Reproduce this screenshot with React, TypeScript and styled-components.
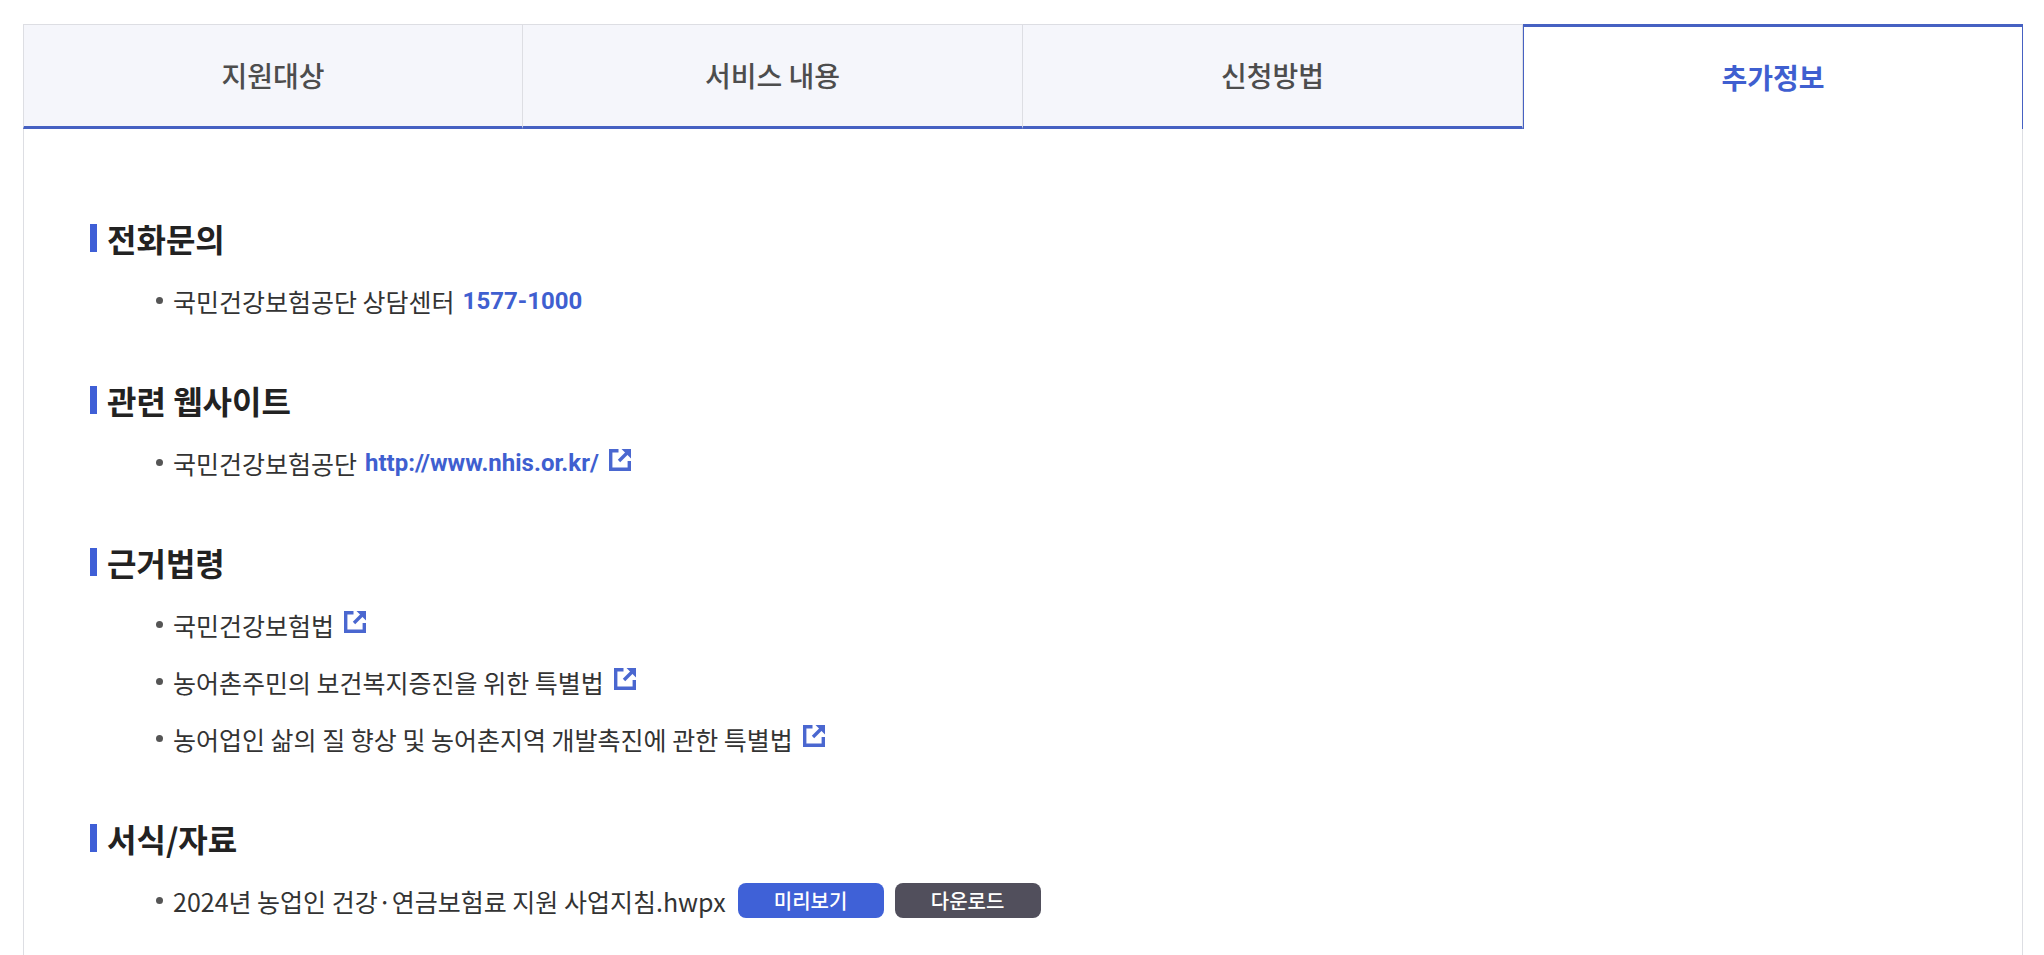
import React, { useState } from "react";
import styled, { createGlobalStyle } from "styled-components";

const GlobalStyle = createGlobalStyle`
  *, *::before, *::after { box-sizing: border-box; }
  body {
    margin: 0;
    background: #fff;
    color: #333;
    font-family: "Noto Sans CJK KR", "Noto Sans", sans-serif;
  }
`;

const Page = styled.main`
  display: flex;
  flex-direction: column;
  min-height: 100vh;
  padding: 24px 21px 0 23px;
`;

const TabList = styled.div`
  display: grid;
  grid-template-columns: repeat(4, 1fr);
`;

const Tab = styled.button<{ $active: boolean }>`
  height: 105px;
  padding: 0 0 2px;
  border-style: solid;
  border-color: ${(p) => (p.$active ? "#4661c2" : "#dddee3 #dddee3 #4661c2")};
  border-width: ${(p) => (p.$active ? "3px 1px 0" : "1px 1px 3px 0")};
  background: ${(p) => (p.$active ? "#fff" : "#f5f6fb")};
  color: ${(p) => (p.$active ? "#3f5fd0" : "#4d4d4d")};
  font-family: inherit;
  font-size: 28px;
  font-weight: ${(p) => (p.$active ? 700 : 500)};
  cursor: pointer;

  &:first-child {
    border-left-width: 1px;
  }
`;

const Panel = styled.div`
  display: flex;
  flex: 1;
  flex-direction: column;
  gap: 47px;
  padding: 85px 66px 20px;
  border: solid #dddee3;
  border-width: 0 1px;
`;

const Heading = styled.h2`
  display: flex;
  align-items: center;
  gap: 10px;
  height: 48px;
  margin: 0 0 10px;
  color: #222;
  font-size: 32px;
  font-weight: 700;
  line-height: 48px;

  &::before {
    content: "";
    width: 7px;
    height: 28px;
    background: #3f5fd6;
  }
`;

const List = styled.ul`
  margin: 0;
  padding: 0 0 0 66px;
  list-style: none;
`;

const Item = styled.li`
  display: flex;
  align-items: center;
  min-height: 57px;
  font-size: 25px;
  line-height: 36px;

  &::before {
    content: "";
    flex: none;
    width: 7px;
    height: 7px;
    margin-right: 10px;
    border-radius: 50%;
    background: #555;
  }
`;

const ContactLink = styled.a`
  display: inline-flex;
  align-items: center;
  margin-left: 8px;
  color: #3f5fd0;
  font-family: Roboto, "Noto Sans CJK KR", sans-serif;
  font-size: 24px;
  font-weight: 700;
  text-decoration: none;
`;

const LawLink = styled.a`
  display: inline-flex;
  align-items: center;
  color: inherit;
  text-decoration: none;
`;

const LinkIcon = styled.svg`
  flex: none;
  width: 22px;
  height: 22px;
  margin: 0 0 6px 10px;
`;

const Actions = styled.div`
  display: flex;
  gap: 11px;
  margin-left: 12px;
`;

const ActionButton = styled.button<{ $tone: "primary" | "dark" }>`
  width: 146px;
  height: 35px;
  padding: 0;
  border: 0;
  border-radius: 8px;
  background: ${(p) => (p.$tone === "primary" ? "#3f61d7" : "#514f5c")};
  color: #fff;
  font-family: inherit;
  font-size: 20px;
  font-weight: 500;
  line-height: 35px;
  cursor: pointer;
`;

const ExternalIcon = () => (
  <LinkIcon viewBox="0 0 22 22" fill="none" stroke="#4a67d0" strokeWidth="3.4" aria-hidden="true">
    <path d="M9.5 1.7H1.7V20.3H20.3V12" />
    <path d="M10 12L18.5 3.5" />
    <path d="M12.5 0H22V9.5Z" fill="#4a67d0" stroke="none" />
  </LinkIcon>
);

const tabs = ["지원대상", "서비스 내용", "신청방법", "추가정보"];

const laws = [
  "국민건강보험법",
  "농어촌주민의 보건복지증진을 위한 특별법",
  "농어업인 삶의 질 향상 및 농어촌지역 개발촉진에 관한 특별법",
];

export default function App() {
  const [active, setActive] = useState(3);

  return (
    <Page>
      <GlobalStyle />
      <TabList role="tablist">
        {tabs.map((label, i) => (
          <Tab
            key={label}
            id={`tab-${i}`}
            type="button"
            role="tab"
            aria-selected={i === active}
            aria-controls="tab-panel"
            $active={i === active}
            onClick={() => setActive(i)}
          >
            {label}
          </Tab>
        ))}
      </TabList>
      <Panel id="tab-panel" role="tabpanel" aria-labelledby={`tab-${active}`}>
        <section>
          <Heading>전화문의</Heading>
          <List>
            <Item>
              국민건강보험공단 상담센터
              <ContactLink href="tel:1577-1000">1577-1000</ContactLink>
            </Item>
          </List>
        </section>
        <section>
          <Heading>관련 웹사이트</Heading>
          <List>
            <Item>
              국민건강보험공단
              <ContactLink href="http://www.nhis.or.kr/">
                http://www.nhis.or.kr/
                <ExternalIcon />
              </ContactLink>
            </Item>
          </List>
        </section>
        <section>
          <Heading>근거법령</Heading>
          <List>
            {laws.map((law) => (
              <Item key={law}>
                <LawLink href="#law">
                  {law}
                  <ExternalIcon />
                </LawLink>
              </Item>
            ))}
          </List>
        </section>
        <section>
          <Heading>서식/자료</Heading>
          <List>
            <Item>
              2024년 농업인 건강·연금보험료 지원 사업지침.hwpx
              <Actions>
                <ActionButton type="button" $tone="primary">미리보기</ActionButton>
                <ActionButton type="button" $tone="dark">다운로드</ActionButton>
              </Actions>
            </Item>
          </List>
        </section>
      </Panel>
    </Page>
  );
}
